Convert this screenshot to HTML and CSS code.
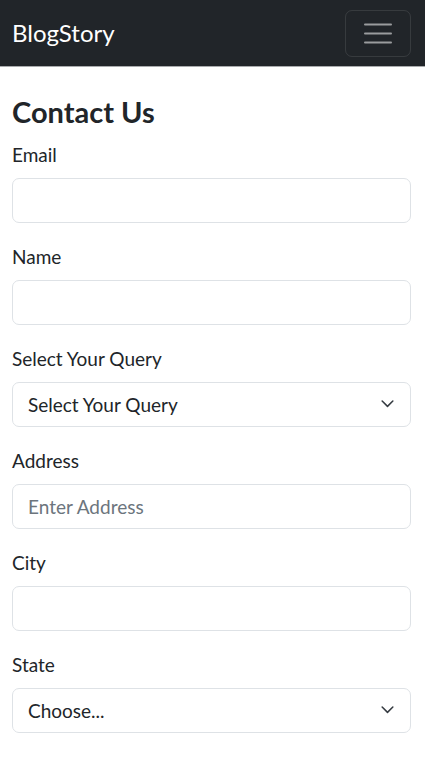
FILE: index.html
```html
<!DOCTYPE html>
<html lang="en">
<head>
<meta charset="utf-8">
<meta name="viewport" content="width=device-width, initial-scale=1">
<title>BlogStory - Contact Us</title>
<link rel="stylesheet" href="styles.css">
</head>
<body>
<nav class="navbar">
  <a class="brand" href="#">BlogStory</a>
  <button class="toggler" type="button" aria-label="Toggle navigation">
    <svg class="toggler-icon" width="28" height="22" viewBox="0 0 28 22" aria-hidden="true">
      <rect x="0" y="1.5" width="28" height="2" rx="1"/>
      <rect x="0" y="10.5" width="28" height="2" rx="1"/>
      <rect x="0" y="19.5" width="28" height="2" rx="1"/>
    </svg>
  </button>
</nav>
<main class="container">
  <h2 class="title">Contact Us</h2>
  <form class="form">
    <div class="field">
      <label class="label" for="email">Email</label>
      <input class="control" type="email" id="email">
    </div>
    <div class="field">
      <label class="label" for="name">Name</label>
      <input class="control" type="text" id="name">
    </div>
    <div class="field">
      <label class="label" for="query">Select Your Query</label>
      <div class="select-wrap">
        <select class="control select" id="query">
          <option>Select Your Query</option>
          <option>General</option>
          <option>Feedback</option>
        </select>
        <svg class="chev" width="14" height="9" viewBox="0 0 14 9" aria-hidden="true"><path d="M1 1.2l6 6 6-6"/></svg>
      </div>
    </div>
    <div class="field">
      <label class="label" for="address">Address</label>
      <input class="control" type="text" id="address" placeholder="Enter Address">
    </div>
    <div class="field">
      <label class="label" for="city">City</label>
      <input class="control" type="text" id="city">
    </div>
    <div class="field">
      <label class="label" for="state">State</label>
      <div class="select-wrap">
        <select class="control select" id="state">
          <option>Choose...</option>
          <option>...</option>
        </select>
        <svg class="chev" width="14" height="9" viewBox="0 0 14 9" aria-hidden="true"><path d="M1 1.2l6 6 6-6"/></svg>
      </div>
    </div>
  </form>
</main>
</body>
</html>
```

FILE: styles.css
```css
* { box-sizing: border-box; }

html, body {
  margin: 0;
  padding: 0;
}

body {
  font-family: Lato, "Liberation Sans", sans-serif;
  color: #212529;
  background: #fff;
  font-size: 19px;
}

.navbar {
  height: 67px;
  background: #212529;
  border-bottom: 1px solid #a9abad;
  display: flex;
  align-items: center;
  justify-content: space-between;
  padding: 0 14px 0 12px;
}

.brand {
  color: #fff;
  text-decoration: none;
  font-size: 24px;
  line-height: 36px;
}

.toggler {
  width: 66px;
  height: 47px;
  background: transparent;
  border: 1px solid rgba(255, 255, 255, 0.1);
  border-radius: 7px;
  display: flex;
  align-items: center;
  justify-content: center;
  padding: 0;
}

.toggler-icon {
  fill: rgba(255, 255, 255, 0.55);
  display: block;
}

.container {
  padding: 0 14px 0 12px;
}

.title {
  font-size: 29px;
  font-weight: 700;
  line-height: 35px;
  margin: 27px 0 10px;
}

.form {
  display: flex;
  flex-direction: column;
  gap: 18px;
}

.field {
  display: flex;
  flex-direction: column;
}

.label {
  font-size: 19px;
  line-height: 29px;
  padding-top: 1px;
  margin-bottom: 9px;
}

.control {
  width: 100%;
  height: 45px;
  border: 1px solid #dee2e6;
  border-radius: 7px;
  padding: 0 15px;
  font-family: inherit;
  font-size: 19px;
  color: #212529;
  background: #fff;
  outline: none;
}

.control::placeholder {
  color: #6c757d;
  opacity: 1;
}

.select-wrap {
  position: relative;
}

.select {
  appearance: none;
  -webkit-appearance: none;
  padding-right: 40px;
}

.chev {
  position: absolute;
  right: 17px;
  top: 18px;
  width: 13px;
  height: 8px;
  fill: none;
  stroke: #343a40;
  stroke-width: 1.7;
  stroke-linecap: round;
  stroke-linejoin: round;
  pointer-events: none;
}
```
